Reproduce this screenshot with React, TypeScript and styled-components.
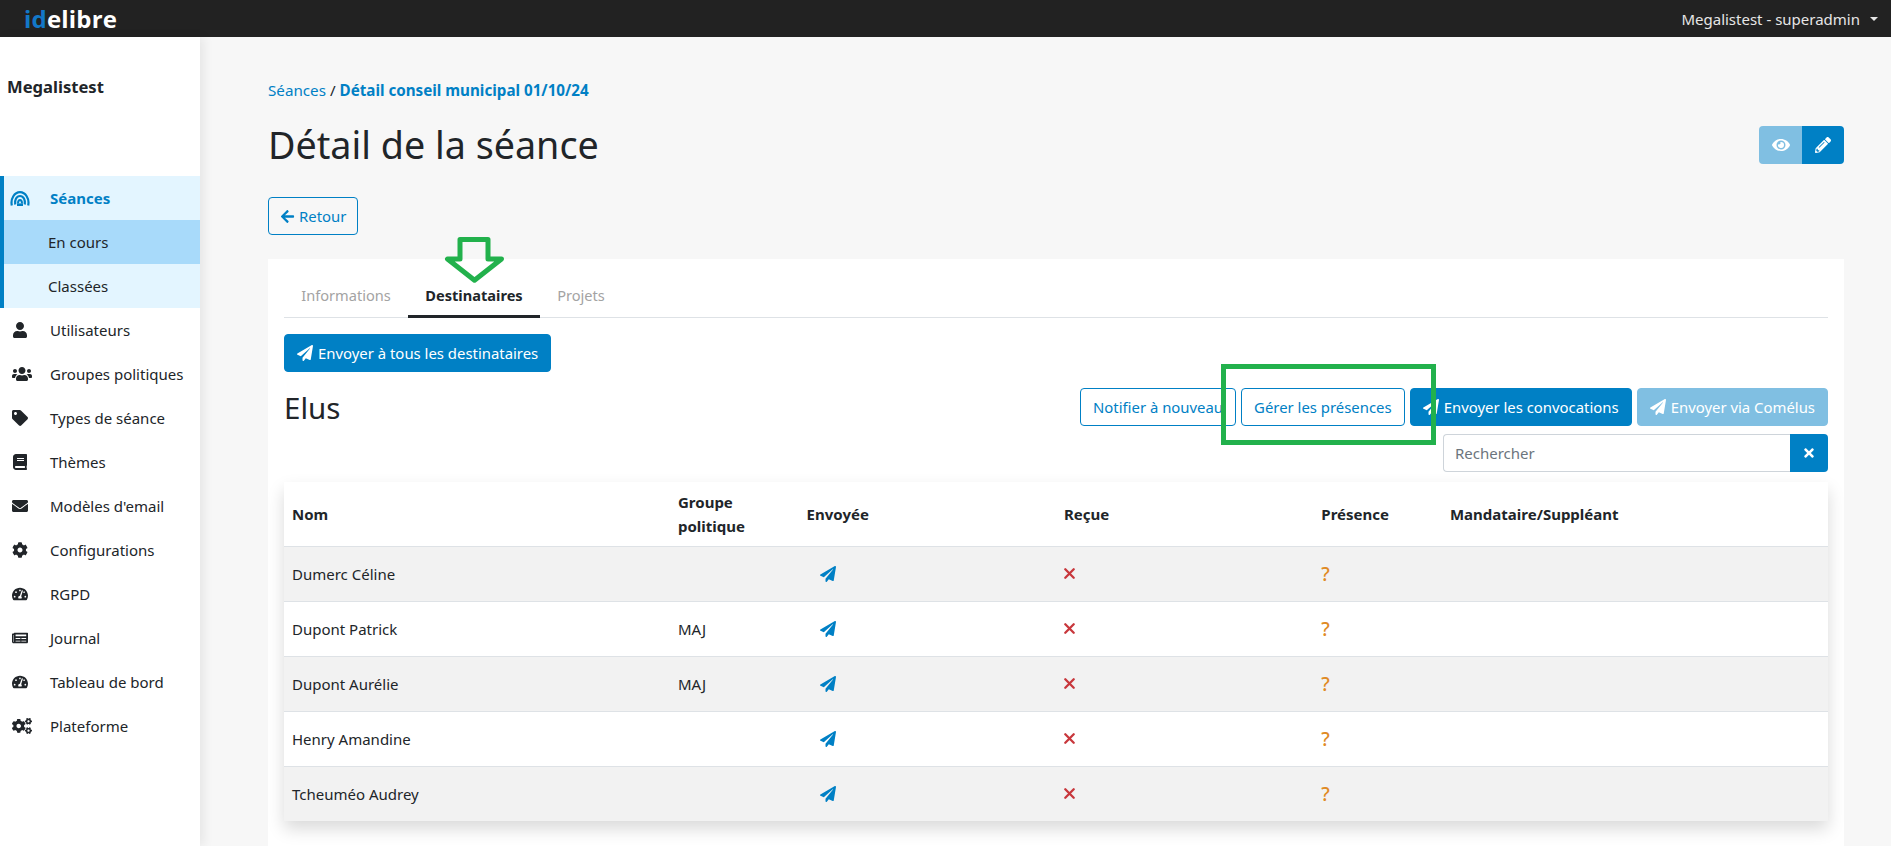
import React from "react";
import styled, { createGlobalStyle } from "styled-components";
import {
  FaArrowLeft,
  FaBook,
  FaCog,
  FaCogs,
  FaEnvelope,
  FaEye,
  FaNewspaper,
  FaPaperPlane,
  FaPencilAlt,
  FaTachometerAlt,
  FaTag,
  FaTimes,
  FaUser,
  FaUsers,
} from "react-icons/fa";

const BLUE = "#0080c5";
const FONT = `"Noto Sans", "Open Sans", "Liberation Sans", sans-serif`;

const GlobalStyle = createGlobalStyle`
  html, body {
    margin: 0;
    height: 100%;
    overflow: hidden;
  }
  body {
    font-family: ${FONT};
    font-size: 15px;
    color: #212529;
    background: #f7f7f7;
  }
`;

const Page = styled.div`
  height: 100vh;
  display: flex;
  flex-direction: column;
`;

const Navbar = styled.header`
  height: 37px;
  flex: none;
  display: flex;
  align-items: center;
  justify-content: space-between;
  padding: 0 13px 0 24px;
  background: #222222;
`;

const Logo = styled.div`
  font-family: "Open Sans", sans-serif;
  font-size: 24px;
  font-weight: 700;
  letter-spacing: 0.2px;
  color: #ffffff;
  span {
    color: #1278c8;
  }
`;

const UserMenu = styled.div`
  display: flex;
  align-items: center;
  gap: 10px;
  color: #e6e6e6;
  font-size: 15px;
  &::after {
    content: "";
    border-top: 4px solid #e6e6e6;
    border-left: 4px solid transparent;
    border-right: 4px solid transparent;
  }
`;

const Body = styled.div`
  flex: 1;
  min-height: 0;
  display: flex;
`;

const Sidebar = styled.aside`
  width: 200px;
  flex: none;
  background: #ffffff;
  box-shadow: 4px 0 10px rgba(0, 0, 0, 0.07);
  z-index: 1;
`;

const Tenant = styled.div`
  height: 139px;
  padding: 39px 0 0 7px;
  box-sizing: border-box;
  font-size: 16.6px;
  font-weight: 700;
  line-height: 22px;
`;

const MenuGroup = styled.div`
  border-left: 4px solid ${BLUE};
  background: #e3f5ff;
`;

const MenuRow = styled.div<{ $active?: boolean }>`
  height: 44px;
  display: flex;
  align-items: center;
  padding-left: ${(p) => (p.$active ? 6 : 12)}px;
  font-size: 15px;
  font-weight: ${(p) => (p.$active ? 700 : 400)};
  color: ${(p) => (p.$active ? BLUE : "#212529")};
  svg {
    flex: none;
  }
`;

const MenuIcon = styled.span<{ $wide?: boolean }>`
  width: ${(p) => (p.$wide ? 40 : 38)}px;
  flex: none;
  display: flex;
  align-items: center;
`;

const SubRow = styled.div<{ $current?: boolean }>`
  height: 44px;
  display: flex;
  align-items: center;
  padding-left: 44px;
  font-size: 15px;
  background: ${(p) => (p.$current ? "#a8dafa" : "transparent")};
`;

const Main = styled.main`
  flex: 1;
  min-width: 0;
  padding: 43px 47px 0 68px;
  display: flex;
  flex-direction: column;
`;

const Breadcrumb = styled.nav`
  flex: none;
  height: 20px;
  line-height: 20px;
  font-size: 15.2px;
  a {
    color: ${BLUE};
  }
  strong {
    color: ${BLUE};
    font-weight: 700;
  }
`;

const TitleBar = styled.div`
  flex: none;
  margin-top: 21px;
  display: flex;
  align-items: center;
  justify-content: space-between;
`;

const Title = styled.h1`
  margin: 0;
  font-size: 37.7px;
  font-weight: 400;
  line-height: 47px;
`;

const ActionGroup = styled.div`
  display: flex;
`;

const GroupButton = styled.button<{ $faded?: boolean }>`
  width: ${(p) => (p.$faded ? 43 : 42)}px;
  height: 38px;
  padding: 0;
  border: none;
  display: flex;
  align-items: center;
  justify-content: center;
  color: #ffffff;
  background: ${(p) => (p.$faded ? "#80bfe2" : BLUE)};
  border-radius: ${(p) => (p.$faded ? "4px 0 0 4px" : "0 4px 4px 0")};
`;

const Button = styled.button<{ $outline?: boolean; $faded?: boolean }>`
  height: 38px;
  flex: none;
  padding: 0 12px;
  box-sizing: border-box;
  display: inline-flex;
  align-items: center;
  gap: 5px;
  font-family: ${FONT};
  font-size: 14.9px;
  white-space: nowrap;
  border-radius: 4px;
  border: 1px solid ${(p) => (p.$faded ? "#80bfe2" : BLUE)};
  color: ${(p) => (p.$outline ? BLUE : "#ffffff")};
  background: ${(p) => (p.$outline ? "#ffffff" : p.$faded ? "#80bfe2" : BLUE)};
`;

const BackButton = styled(Button)`
  align-self: flex-start;
  margin-top: 29px;
  padding: 0 11px;
  gap: 4px;
  background: transparent;
`;

const Card = styled.section`
  flex: 1;
  margin-top: 24px;
  padding: 16px;
  background: #ffffff;
`;

const Tabs = styled.div`
  display: flex;
  height: 43px;
  box-sizing: border-box;
  border-bottom: 1px solid #dee2e6;
`;

const Tab = styled.div<{ $active?: boolean }>`
  position: relative;
  height: 43px;
  box-sizing: border-box;
  padding: 0 17.25px;
  display: flex;
  align-items: center;
  font-size: 14.6px;
  font-weight: ${(p) => (p.$active ? 700 : 400)};
  color: ${(p) => (p.$active ? "#212529" : "#a3a3a3")};
  border-bottom: 3px solid ${(p) => (p.$active ? "#212529" : "transparent")};
`;

const ArrowMark = styled.svg`
  position: absolute;
  left: 36px;
  top: -38px;
`;

const SendAll = styled(Button)`
  margin-top: 16px;
`;

const SectionHead = styled.div`
  margin-top: 16px;
  display: flex;
  justify-content: space-between;
`;

const SectionTitle = styled.h3`
  margin: 0;
  font-size: 29.5px;
  font-weight: 400;
  line-height: 40px;
`;

const SectionTools = styled.div`
  display: flex;
  flex-direction: column;
  align-items: flex-end;
  gap: 8px;
`;

const ButtonRow = styled.div`
  display: flex;
  gap: 5px;
`;

const Highlighted = styled.span`
  position: relative;
  display: inline-flex;
`;

const HighlightBox = styled.span`
  position: absolute;
  left: -20px;
  right: -31px;
  top: -24px;
  bottom: -19px;
  border: 5px solid #22b14c;
  z-index: 2;
  pointer-events: none;
`;

const SearchGroup = styled.div`
  display: flex;
  width: 385px;
  height: 38px;
`;

const SearchInput = styled.input`
  flex: 1;
  min-width: 0;
  box-sizing: border-box;
  padding: 0 11px;
  font-family: ${FONT};
  font-size: 15px;
  border: 1px solid #ced4da;
  border-right: none;
  border-radius: 4px 0 0 4px;
  &::placeholder {
    color: #6c757d;
    opacity: 1;
  }
`;

const ClearButton = styled.button`
  width: 38px;
  padding: 0;
  border: none;
  display: flex;
  align-items: center;
  justify-content: center;
  color: #ffffff;
  background: ${BLUE};
  border-radius: 0 4px 4px 0;
`;

const Table = styled.table`
  width: 100%;
  margin-top: 10px;
  border-collapse: collapse;
  table-layout: fixed;
  background: #ffffff;
  box-shadow: 0 8px 16px rgba(0, 0, 0, 0.15);
  th {
    height: 64px;
    box-sizing: border-box;
    padding: 9px 8px 7px;
    text-align: left;
    font-weight: 700;
    line-height: 23.5px;
    border-bottom: 1px solid #dee2e6;
  }
  td {
    height: 55px;
    box-sizing: border-box;
    padding: 0 8px;
    border-top: 1px solid #dee2e6;
  }
  tbody tr:nth-child(odd) {
    background: #f2f2f2;
  }
`;

const SentCell = styled.td`
  color: ${BLUE};
  svg {
    display: block;
    margin-left: 13px;
  }
`;

const RefusedCell = styled.td`
  color: #c8373c;
  svg {
    display: block;
  }
`;

const UnknownCell = styled.td`
  color: #e08a25;
  font-size: 19px;
  font-weight: 500;
`;

const columns = ["25%", "8.33%", "16.67%", "16.67%", "8.33%", "25%"];

const people = [
  { name: "Dumerc Céline", group: "" },
  { name: "Dupont Patrick", group: "MAJ" },
  { name: "Dupont Aurélie", group: "MAJ" },
  { name: "Henry Amandine", group: "" },
  { name: "Tcheuméo Audrey", group: "" },
];

const menu = [
  { label: "Utilisateurs", icon: <FaUser size={16} /> },
  { label: "Groupes politiques", icon: <FaUsers size={20} /> },
  { label: "Types de séance", icon: <FaTag size={16} /> },
  { label: "Thèmes", icon: <FaBook size={16} /> },
  { label: "Modèles d'email", icon: <FaEnvelope size={16} /> },
  { label: "Configurations", icon: <FaCog size={16} /> },
  { label: "RGPD", icon: <FaTachometerAlt size={16} /> },
  { label: "Journal", icon: <FaNewspaper size={16} /> },
  { label: "Tableau de bord", icon: <FaTachometerAlt size={16} /> },
  { label: "Plateforme", icon: <FaCogs size={20} /> },
];

const SessionsIcon = () => (
  <svg width="20" height="15" viewBox="0 0 20 15" fill="none" stroke="currentColor">
    <path d="M1.8 14.5C.4 7.5 4.5 1.2 10 1.2S19.6 7.5 18.2 14.5" strokeWidth="2.2" />
    <path d="M5.2 13.5C4.4 9 6.6 5 10 5s5.6 4 4.8 8.5" strokeWidth="2.2" />
    <path d="M8 12.5c0-2.4.8-3.6 2-3.6s2 1.2 2 3.6" strokeWidth="2" />
    <rect x="7" y="12.4" width="6" height="2.6" fill="currentColor" stroke="none" />
  </svg>
);

const CrossIcon = () => (
  <svg width="11" height="11" viewBox="0 0 11 11" stroke="currentColor" strokeWidth="2.3" strokeLinecap="round">
    <path d="M1.3 1.3 9.7 9.7M9.7 1.3 1.3 9.7" />
  </svg>
);

const App = () => {
  return (
    <Page>
      <GlobalStyle />
      <Navbar>
        <Logo>
          <span>id</span>elibre
        </Logo>
        <UserMenu>Megalistest - superadmin</UserMenu>
      </Navbar>
      <Body>
        <Sidebar>
          <Tenant>Megalistest</Tenant>
          <MenuGroup>
            <MenuRow $active>
              <MenuIcon $wide>
                <SessionsIcon />
              </MenuIcon>
              Séances
            </MenuRow>
            <SubRow $current>En cours</SubRow>
            <SubRow>Classées</SubRow>
          </MenuGroup>
          {menu.map((item) => (
            <MenuRow key={item.label}>
              <MenuIcon>{item.icon}</MenuIcon>
              {item.label}
            </MenuRow>
          ))}
        </Sidebar>
        <Main>
          <Breadcrumb>
            <a>Séances</a> / <strong>Détail conseil municipal 01/10/24</strong>
          </Breadcrumb>
          <TitleBar>
            <Title>Détail de la séance</Title>
            <ActionGroup>
              <GroupButton $faded>
                <FaEye size={18} />
              </GroupButton>
              <GroupButton>
                <FaPencilAlt size={16} />
              </GroupButton>
            </ActionGroup>
          </TitleBar>
          <BackButton $outline>
            <FaArrowLeft size={15} />
            Retour
          </BackButton>
          <Card>
            <Tabs>
              <Tab>Informations</Tab>
              <Tab $active>
                Destinataires
                <ArrowMark width="61" height="46" viewBox="0 0 61 46" fill="none">
                  <path
                    d="M16 2.5H44V22H57.5L30.5 43.2L3.5 22H16Z"
                    stroke="#22b14c"
                    strokeWidth="5"
                    strokeLinejoin="round"
                  />
                </ArrowMark>
              </Tab>
              <Tab>Projets</Tab>
            </Tabs>
            <SendAll>
              <FaPaperPlane size={16} />
              Envoyer à tous les destinataires
            </SendAll>
            <SectionHead>
              <SectionTitle>Elus</SectionTitle>
              <SectionTools>
                <ButtonRow>
                  <Button $outline>Notifier à nouveau</Button>
                  <Highlighted>
                    <Button $outline>Gérer les présences</Button>
                    <HighlightBox />
                  </Highlighted>
                  <Button>
                    <FaPaperPlane size={16} />
                    Envoyer les convocations
                  </Button>
                  <Button $faded>
                    <FaPaperPlane size={16} />
                    Envoyer via Comélus
                  </Button>
                </ButtonRow>
                <SearchGroup>
                  <SearchInput placeholder="Rechercher" />
                  <ClearButton>
                    <FaTimes size={14} />
                  </ClearButton>
                </SearchGroup>
              </SectionTools>
            </SectionHead>
            <Table>
              <colgroup>
                {columns.map((width, i) => (
                  <col key={i} style={{ width }} />
                ))}
              </colgroup>
              <thead>
                <tr>
                  <th>Nom</th>
                  <th>Groupe politique</th>
                  <th>Envoyée</th>
                  <th>Reçue</th>
                  <th>Présence</th>
                  <th>Mandataire/Suppléant</th>
                </tr>
              </thead>
              <tbody>
                {people.map((person) => (
                  <tr key={person.name}>
                    <td>{person.name}</td>
                    <td>{person.group}</td>
                    <SentCell>
                      <FaPaperPlane size={16} />
                    </SentCell>
                    <RefusedCell>
                      <CrossIcon />
                    </RefusedCell>
                    <UnknownCell>?</UnknownCell>
                    <td />
                  </tr>
                ))}
              </tbody>
            </Table>
          </Card>
        </Main>
      </Body>
    </Page>
  );
};

export default App;
